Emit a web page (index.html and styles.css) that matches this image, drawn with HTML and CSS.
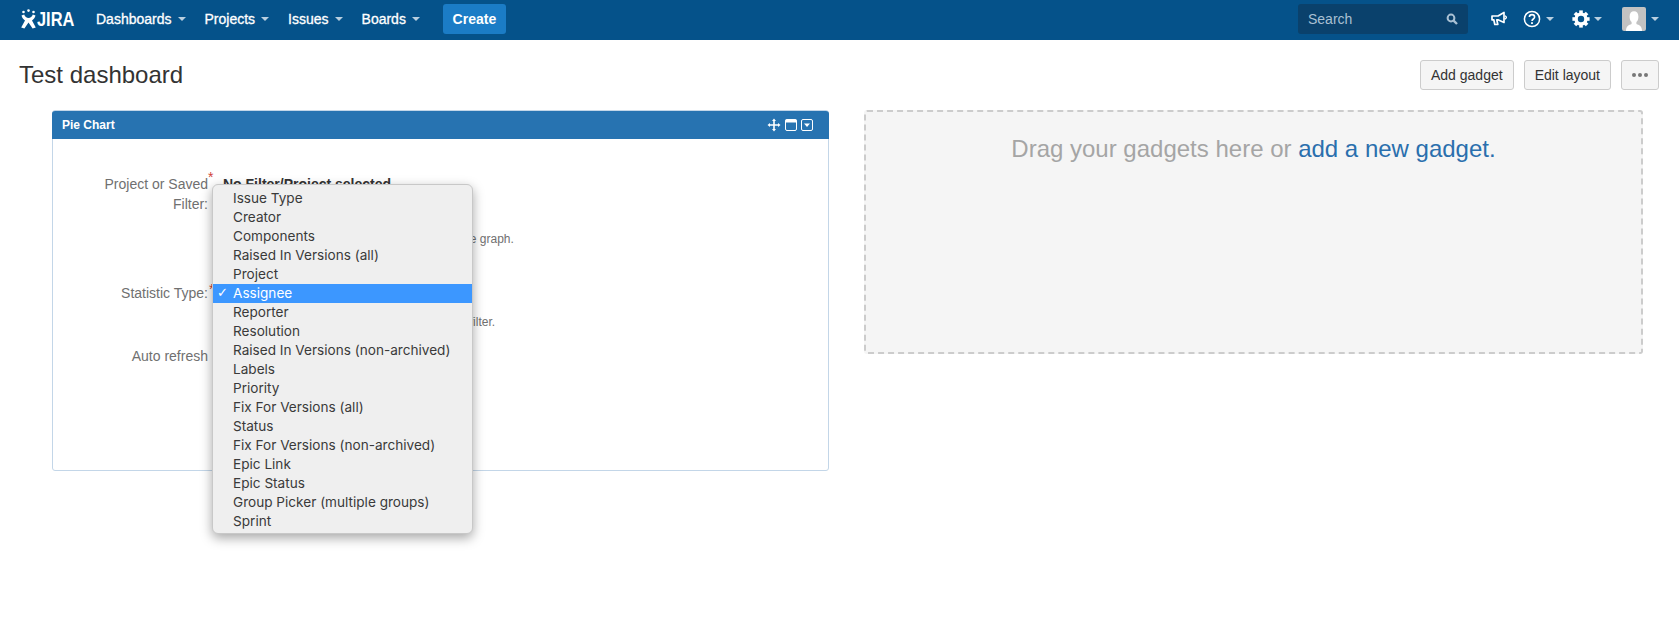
FILE: index.html
```html
<!DOCTYPE html>
<html lang="en">
<head>
    <meta charset="UTF-8">
    <title>Test dashboard</title>
    <link rel="stylesheet" href="styles.css">
</head>
<body>
    <header class="topbar">
        <a class="logo">
            <svg width="18" height="20" viewBox="0 0 18 20">
                <circle cx="3.5" cy="3" r="1.3" fill="#fff"/>
                <circle cx="8.5" cy="1.6" r="1.3" fill="#fff"/>
                <circle cx="13.5" cy="3" r="1.3" fill="#fff"/>
                <path d="M1.5 6.5 L4.2 5.6 C5 8 6.5 9 8.5 9 C10.5 9 12 8 12.8 5.6 L15.5 6.5 C14.8 9 13.6 10.4 12 11.4 L15.8 18.6 L12.6 19.4 L8.5 13.6 L4.4 19.4 L1.2 18.6 L5 11.4 C3.4 10.4 2.2 9 1.5 6.5 Z" fill="#fff"/>
            </svg>
            <span class="logo-text">JIRA</span>
        </a>
        <nav class="mainnav">
            <a>Dashboards<i class="caret"></i></a>
            <a>Projects<i class="caret"></i></a>
            <a>Issues<i class="caret"></i></a>
            <a>Boards<i class="caret"></i></a>
        </nav>
        <button class="create">Create</button>
        <div class="topbar-right">
            <div class="search">
                <span>Search</span>
                <svg width="12" height="12" viewBox="0 0 12 12"><circle cx="5" cy="5" r="3.4" fill="none" stroke="#a9c0d3" stroke-width="2"/><path d="M7.6 7.6 L11 11" stroke="#a9c0d3" stroke-width="2.4"/></svg>
            </div>
            <a class="tool tool-feedback">
                <svg width="16" height="16" viewBox="0 0 16 16"><path d="M1 5 L7 5 L13 1.5 L13 11.5 L7 8.8 L5.8 8.8 L6.8 13.5 L3.8 13.5 L2.8 8.8 L1 8.8 Z" fill="none" stroke="#fff" stroke-width="1.7" stroke-linejoin="round"/><path d="M14 4.6 L15.6 6.4 L14 8.2" fill="none" stroke="#fff" stroke-width="1.3"/></svg>
            </a>
            <a class="tool tool-help">
                <svg width="20" height="20" viewBox="0 0 20 20"><circle cx="10" cy="10" r="7.6" fill="none" stroke="#fff" stroke-width="1.5"/><path d="M7.4 8 C7.4 4.8 12.6 4.8 12.6 8 C12.6 10 10 10 10 12" fill="none" stroke="#fff" stroke-width="1.6"/><rect x="9.1" y="13.2" width="1.8" height="1.8" fill="#fff"/></svg>
                <i class="caret"></i>
            </a>
            <a class="tool tool-gear">
                <svg width="18" height="18" viewBox="0 0 18 18">
                    <circle cx="9" cy="9" r="4.9" fill="none" stroke="#fff" stroke-width="3.4"/>
                    <g fill="#fff">
                        <rect x="7.2" y="0.4" width="3.6" height="4"/>
                        <rect x="7.2" y="13.6" width="3.6" height="4"/>
                        <rect x="0.4" y="7.2" width="4" height="3.6"/>
                        <rect x="13.6" y="7.2" width="4" height="3.6"/>
                        <rect x="7.2" y="0.4" width="3.6" height="4" transform="rotate(45 9 9)"/>
                        <rect x="7.2" y="13.6" width="3.6" height="4" transform="rotate(45 9 9)"/>
                        <rect x="0.4" y="7.2" width="4" height="3.6" transform="rotate(45 9 9)"/>
                        <rect x="13.6" y="7.2" width="4" height="3.6" transform="rotate(45 9 9)"/>
                    </g>
                </svg>
                <i class="caret"></i>
            </a>
            <a class="tool tool-user">
                <svg class="avatar" width="24" height="24" viewBox="0 0 24 24"><rect width="24" height="24" rx="2" fill="#c2c2c2"/><path d="M4 24 C4 19 7 18 9.6 17 L9.6 15 C8 13.6 7.6 11.6 7.6 9.4 C7.6 6 9.4 4.2 12 4.2 C14.6 4.2 16.4 6 16.4 9.4 C16.4 11.6 16 13.6 14.4 15 L14.4 17 C17 18 20 19 20 24 Z" fill="#fff"/></svg>
                <i class="caret"></i>
            </a>
        </div>
    </header>

    <div class="page-head">
        <h1>Test dashboard</h1>
        <div class="page-actions">
            <button class="btn">Add gadget</button>
            <button class="btn">Edit layout</button>
            <button class="btn btn-more"><i></i><i></i><i></i></button>
        </div>
    </div>

    <div class="columns">
        <section class="gadget">
            <div class="gadget-title">
                <span>Pie Chart</span>
                <div class="gadget-icons">
                    <svg width="14" height="14" viewBox="0 0 14 14"><path d="M7 0.5 L9 3 L7.8 3 L7.8 6.2 L11 6.2 L11 5 L13.5 7 L11 9 L11 7.8 L7.8 7.8 L7.8 11 L9 11 L7 13.5 L5 11 L6.2 11 L6.2 7.8 L3 7.8 L3 9 L0.5 7 L3 5 L3 6.2 L6.2 6.2 L6.2 3 L5 3 Z" fill="#fff"/></svg>
                    <svg width="12" height="12" viewBox="0 0 12 12"><rect x="0.5" y="0.5" width="11" height="11" rx="1.5" fill="none" stroke="#fff"/><rect x="0.5" y="0.5" width="11" height="3" fill="#fff"/></svg>
                    <svg width="12" height="12" viewBox="0 0 12 12"><rect x="0.5" y="0.5" width="11" height="11" rx="1.5" fill="none" stroke="#fff"/><path d="M3 4.6 L9 4.6 L6 8 Z" fill="#fff"/></svg>
                </div>
            </div>
            <div class="gadget-body">
                <form class="config">
                    <label class="req req-wrap">Project or Saved Filter:</label>
                    <div class="field field-project">
                        <strong>No Filter/Project selected</strong>
                        <div class="picker"></div>
                        <p class="help">Project or saved filter to use as the basis for the graph.</p>
                    </div>
                    <label class="req">Statistic Type:</label>
                    <div class="field field-stat">
                        <div class="select-focus"></div>
                        <p class="help">Select which type of statistic to display for this filter.</p>
                    </div>
                    <label>Auto refresh</label>
                    <div class="field"></div>
                </form>
                <ul class="select-menu">
                    <li>Issue Type</li>
                    <li>Creator</li>
                    <li>Components</li>
                    <li>Raised In Versions (all)</li>
                    <li>Project</li>
                    <li class="selected">Assignee</li>
                    <li>Reporter</li>
                    <li>Resolution</li>
                    <li>Raised In Versions (non-archived)</li>
                    <li>Labels</li>
                    <li>Priority</li>
                    <li>Fix For Versions (all)</li>
                    <li>Status</li>
                    <li>Fix For Versions (non-archived)</li>
                    <li>Epic Link</li>
                    <li>Epic Status</li>
                    <li>Group Picker (multiple groups)</li>
                    <li>Sprint</li>
                </ul>
            </div>
        </section>

        <section class="dropzone">
            Drag your gadgets here or <a>add a new gadget.</a>
        </section>
    </div>
</body>
</html>
```

FILE: styles.css
```css
* {
    margin: 0;
    padding: 0;
    box-sizing: border-box;
}

html, body {
    min-height: 100%;
}

body {
    min-height: 638px;
    background: #fff;
    color: #333;
    font-family: "Liberation Sans", Arial, sans-serif;
    font-size: 14px;
}

/* top bar */
.topbar {
    height: 40px;
    background: #05528a;
    display: flex;
    align-items: center;
    padding: 0 0 2px 20px;
    color: #fff;
}

.logo {
    display: flex;
    align-items: center;
    width: 76px;
}

.logo-text {
    display: inline-block;
    font-weight: bold;
    font-size: 20px;
    line-height: 20px;
    margin-left: -1px;
    transform: scaleX(0.82);
    transform-origin: left center;
}

.mainnav {
    display: flex;
    gap: 19px;
}

.mainnav a {
    display: flex;
    align-items: center;
    font-size: 14px;
    -webkit-text-stroke: 0.3px #fff;
}

.caret {
    display: inline-block;
    width: 0;
    height: 0;
    margin-left: 6px;
    border-left: 4px solid transparent;
    border-right: 4px solid transparent;
    border-top: 4px solid #b9cfe0;
}

.create {
    margin-left: 23px;
    width: 63px;
    height: 30px;
    border: 0;
    border-radius: 3px;
    background: #1b7cc6;
    color: #fff;
    font-family: inherit;
    font-size: 14px;
    font-weight: bold;
}

.topbar-right {
    margin-left: auto;
    display: flex;
    align-items: center;
}

.search {
    width: 170px;
    height: 30px;
    background: #0a416c;
    border-radius: 3px;
    display: flex;
    align-items: center;
    justify-content: space-between;
    padding: 0 10px;
    color: #a9c0d3;
}

.tool {
    display: flex;
    align-items: center;
}

.tool-feedback {
    margin-left: 23px;
}

.tool-help {
    margin-left: 15px;
}

.tool-help .caret,
.tool-gear .caret {
    margin-left: 4px;
}

.tool-gear {
    margin-left: 18px;
}

.tool-user {
    margin-left: 20px;
    margin-right: 20px;
}

.tool-user .caret {
    margin-left: 5px;
}

/* page title row */
.page-head {
    display: flex;
    align-items: center;
    justify-content: space-between;
    padding: 20px 20px 20px 19px;
}

.page-head h1 {
    font-size: 24px;
    font-weight: normal;
    line-height: 30px;
    color: #333;
}

.page-actions {
    display: flex;
    gap: 10px;
}

.btn {
    height: 30px;
    padding: 0 10px;
    background: #f5f5f5;
    border: 1px solid #ccc;
    border-radius: 3px;
    color: #333;
    font-family: inherit;
    font-size: 14px;
}

.btn-more {
    width: 38px;
    display: flex;
    align-items: center;
    justify-content: center;
    gap: 2px;
}

.btn-more i {
    width: 4px;
    height: 4px;
    border-radius: 50%;
    background: #777;
}

/* dashboard columns */
.columns {
    display: grid;
    grid-template-columns: 777px 779px;
    gap: 35px;
    padding-left: 52px;
    align-items: start;
}

.gadget {
    height: 361px;
    border: 1px solid #c3d6e8;
    border-radius: 3px;
}

.gadget-title {
    height: 28px;
    margin: 0 -1px;
    background: #2773b1;
    border-radius: 3px 3px 0 0;
    display: flex;
    align-items: center;
    justify-content: space-between;
    padding: 0 16px 0 10px;
    color: #fff;
    font-size: 12px;
    font-weight: bold;
}

.gadget-icons {
    display: flex;
    align-items: center;
    gap: 4px;
}

.gadget-body {
    position: relative;
    padding-top: 35px;
}

.config {
    display: grid;
    grid-template-columns: 155px 1fr;
    column-gap: 15px;
    line-height: 20px;
}

.config label {
    text-align: right;
    color: #707070;
}

.req-wrap {
    padding-left: 44px;
}

.req::after {
    content: "*";
    position: absolute;
    margin-left: 1px;
    margin-top: -4px;
    color: #d04437;
}

.req-wrap::after {
    margin-left: 0;
    top: 32px;
    left: 155px;
}

.field-project strong {
    display: block;
    color: #333;
}

.picker {
    width: 249px;
    height: 28px;
    margin-top: 2px;
    border: 1px solid #999;
    background: #f5f5f5;
}

.help {
    font-size: 12px;
    line-height: 16px;
    color: #707070;
}

.field-project {
    height: 109px;
}

.field-project .help {
    margin-top: 7px;
}

.field-stat {
    height: 63px;
}

.select-focus {
    width: 249px;
    height: 30px;
    margin-top: -5px;
    border-radius: 4px;
    background: #3c97ff;
}

.field-stat .help {
    margin-top: 6px;
}

/* open select list, lies over the form */
.select-menu {
    position: absolute;
    left: 159px;
    top: 45px;
    width: 261px;
    height: 350px;
    padding: 4px 0;
    list-style: none;
    background: #efefef;
    border: 1px solid #c8c8c8;
    border-radius: 6px;
    box-shadow: 0 4px 12px rgba(0, 0, 0, 0.35);
    font-family: Inter, "Liberation Sans", sans-serif;
    font-size: 13.6px;
    line-height: 18px;
    color: #3a3a3a;
}

.select-menu li {
    height: 19px;
    padding-left: 20px;
    white-space: nowrap;
}

.select-menu .selected {
    position: relative;
    background: #3c97ff;
    color: #fff;
}

.select-menu .selected::before {
    content: "✓";
    position: absolute;
    left: 4px;
    font-family: "DejaVu Sans", sans-serif;
    font-size: 13px;
    font-weight: bold;
}

/* empty column */
.dropzone {
    height: 244px;
    background: #f5f5f5;
    border: 2px dashed #ccc;
    border-radius: 3px;
    padding-top: 24px;
    text-align: center;
    font-size: 24px;
    line-height: 26px;
    color: #a5a5a5;
}

.dropzone a {
    color: #2a6fad;
}
```
